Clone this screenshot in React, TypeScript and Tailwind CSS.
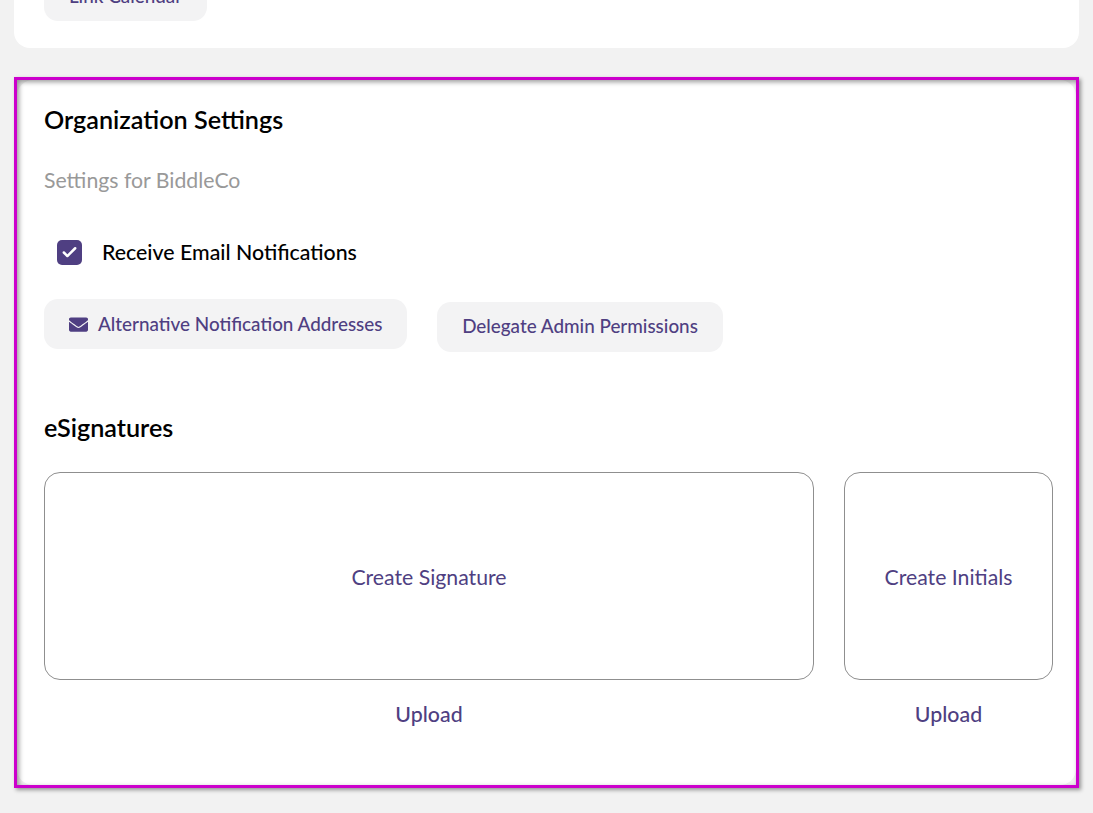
import { Check } from "lucide-react";
import { FaEnvelope } from "react-icons/fa";

function Btn({ children, className = "" }: { children: React.ReactNode; className?: string }) {
  return (
    <button className={`flex h-[50px] items-center rounded-[14px] bg-[#f3f3f4] text-[18.85px] font-medium text-[#4f3f82] ${className}`}>
      {children}
    </button>
  );
}

export default function App() {
  return (
    <div className="h-[813px] overflow-hidden bg-[#f2f2f2] px-[14px] font-['Lato',sans-serif]">
      <div className="-mt-[29px] h-[77px] rounded-b-[16px] bg-white pl-[30px]">
        <button className="h-[50px] w-[163px] rounded-[14px] bg-[#f3f3f4] text-[18.85px] font-medium text-[#4f3f82]">
          Link Calendar
        </button>
      </div>
      <section className="relative mt-[29px] h-[711px] border-[3px] border-[#cc00cc] bg-[#f2f2f2] shadow-[2px_2px_4px_rgba(0,0,0,0.4)]">
        <div className="h-full rounded-[16px] bg-white pl-[27px] pr-[23px] pt-[21px]">
          <h2 className="text-[25.2px] font-semibold leading-[36px] text-black">Organization Settings</h2>
          <p className="mt-[28px] text-[21.25px] leading-[30px] text-[#999999]">Settings for BiddleCo</p>
          <div className="mt-[42px] flex h-[30px] items-center pl-[13px]">
            <span className="flex h-[25px] w-[25px] items-center justify-center rounded-[5px] bg-[#4f3f82]">
              <Check className="h-[17px] w-[17px] text-white" strokeWidth={3.5} />
            </span>
            <span className="ml-[20px] pt-[2px] text-[21.33px] font-medium text-black">Receive Email Notifications</span>
          </div>
          <div className="mt-[32px] flex items-start gap-[30px]">
            <Btn className="w-[363px] pl-[25px]">
              <FaEnvelope className="mr-[10px] h-[19px] w-[19px] text-[#4f3f82]" />
              Alternative Notification Addresses
            </Btn>
            <Btn className="mt-[3px] w-[286px] justify-center pb-[1px]">Delegate Admin Permissions</Btn>
          </div>
          <h3 className="mt-[57px] text-[25.2px] font-semibold leading-[36px] text-black">eSignatures</h3>
          <div className="mt-[27px] flex gap-[30px]">
            <div className="w-[770px]">
              <button className="flex h-[208px] w-full items-center justify-center rounded-[16px] border border-[#8f8f8f] pt-[4px] text-[21.25px] text-[#4f3f82]">
                Create Signature
              </button>
              <div className="mt-[19px] text-center text-[21.33px] font-medium leading-[30px] text-[#4f3f82]">Upload</div>
            </div>
            <div className="w-[209px]">
              <button className="flex h-[208px] w-full items-center justify-center rounded-[16px] border border-[#8f8f8f] pt-[4px] text-[21.25px] text-[#4f3f82]">
                Create Initials
              </button>
              <div className="mt-[19px] text-center text-[21.33px] font-medium leading-[30px] text-[#4f3f82]">Upload</div>
            </div>
          </div>
        </div>
        <div className="pointer-events-none absolute inset-0 shadow-[inset_2px_2px_5px_rgba(0,0,0,0.4)]" />
      </section>
    </div>
  );
}
